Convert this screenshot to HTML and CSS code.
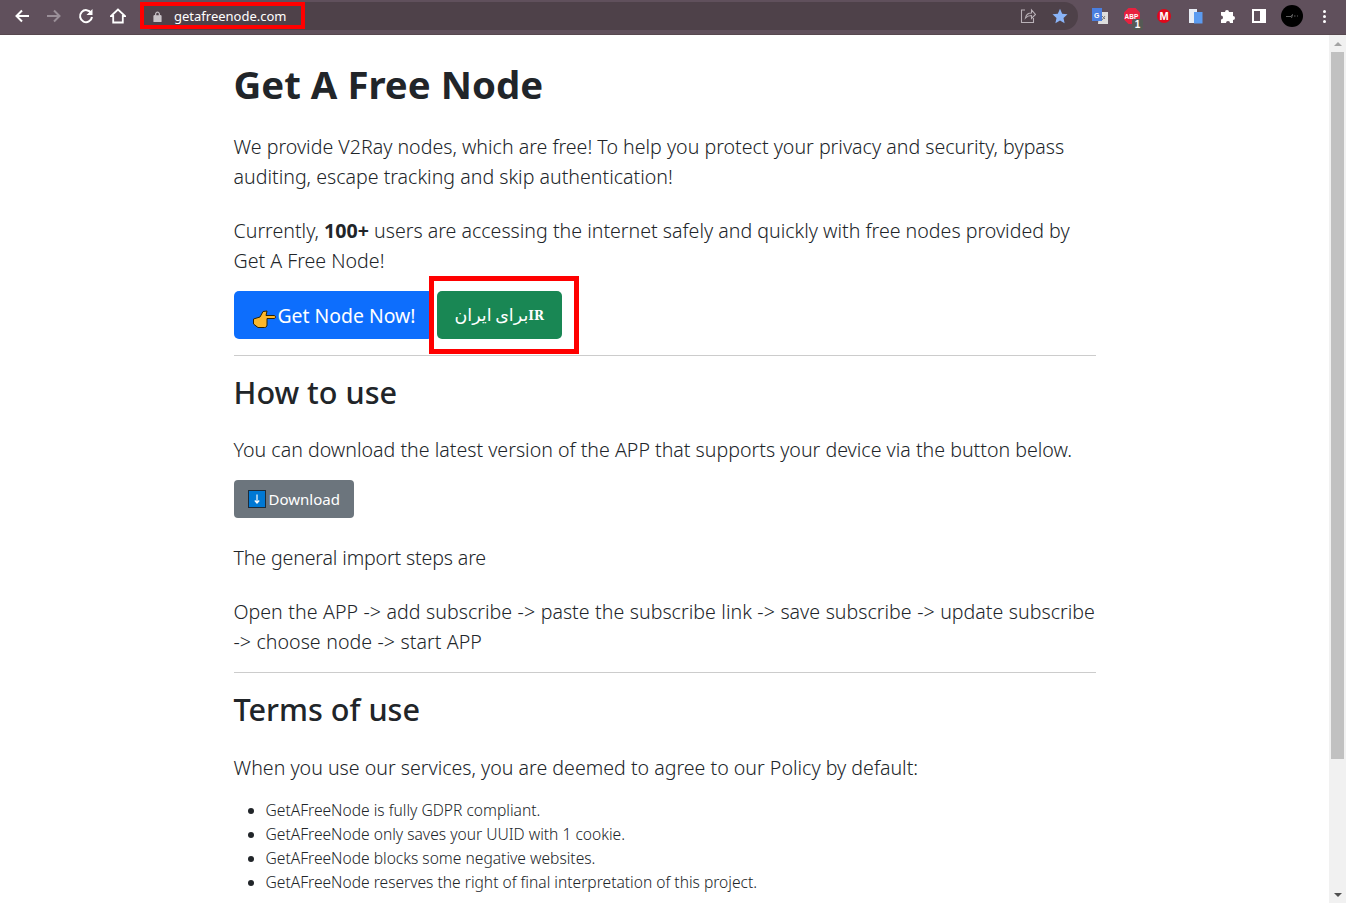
FILE: index.html
```html
<!DOCTYPE html>
<html>
    <head>
        <title>Get A Free Node</title>
        <meta charset="utf-8" />
        <link rel="stylesheet" href="styles.css">
    </head>
    <body>
        <div class="toolbar">
            <svg class="nav-icon" viewBox="0 0 16 16"><path d="M15 8H3M8 2.5L2.5 8 8 13.5" fill="none" stroke="#fff" stroke-width="2"/></svg>
            <svg class="nav-icon" viewBox="0 0 16 16"><path d="M1 8h12M8 2.5L13.5 8 8 13.5" fill="none" stroke="#9a8f98" stroke-width="2"/></svg>
            <svg class="nav-icon" viewBox="0 0 16 16"><path d="M13.2 5A6 6 0 1 0 14 9" fill="none" stroke="#fff" stroke-width="2"/><path d="M14.5 1v6h-6z" fill="#fff"/></svg>
            <svg class="nav-icon" viewBox="0 0 16 16"><path d="M8 1.5L1 8h2.2v6.5h9.6V8H15z" fill="none" stroke="#fff" stroke-width="1.8"/></svg>
            <div class="omnibox">
                <div class="omnibox__url">
                    <svg class="omnibox__lock" viewBox="0 0 10 12"><path d="M1 5h8v7H1zM2.8 5V3.2a2.2 2.2 0 0 1 4.4 0V5" fill="#c9c3c8" stroke="#c9c3c8"/><path d="M3.6 4.5V3.2a1.4 1.4 0 0 1 2.8 0v1.3z" fill="#4e4149"/></svg>
                    <span>getafreenode.com</span>
                    <div class="mark mark--url"></div>
                </div>
                <div class="omnibox__actions">
                    <svg class="tool-icon" viewBox="0 0 16 16"><path d="M5 2H1.500v12.500h12V10M5.500 10c.5-3 3-5 6-5V2l4 4.500-4 4V7.500c-2.500 0-4.500.8-6 2.500z" fill="none" stroke="#b9b1b7" stroke-width="1.100"/></svg>
                    <svg class="tool-icon" viewBox="0 0 16 16"><path d="M8 .8l2.200 4.900 5.300.6-4 3.600 1.100 5.300L8 12.500l-4.600 2.700 1.100-5.300-4-3.600 5.300-.6z" fill="#8ab4f8"/></svg>
                </div>
            </div>
            <div class="extensions">
                <svg class="ext-icon" viewBox="0 0 18 18"><path d="M8 5h9v12H7z" fill="#ddd"/><path d="M1 1h10v13H1z" fill="#4a7fe0"/><text x="3" y="10.500" class="ext-icon__g">G</text><path d="M11 9l3 3M14 9l-3 4" stroke="#777" fill="none"/></svg>
                <div class="abp">
                    <svg class="ext-icon" viewBox="0 0 18 18"><path d="M5.500 1h7L17 5.500v7L12.500 17h-7L1 12.500v-7z" fill="#e8213f"/><text x="1.500" y="11.500" class="ext-icon__abp">ABP</text></svg>
                    <span class="abp__badge">1</span>
                </div>
                <div class="mega">M</div>
                <svg class="ext-icon" viewBox="0 0 18 18"><path d="M2 2h8v14H2z" fill="#e8edf5"/><path d="M7 5h8.500v11.500H7z" fill="#5b9bf0"/></svg>
                <svg class="ext-icon" viewBox="0 0 18 18"><path d="M2 5h4a2 2 0 1 1 4 0h4v4a2 2 0 1 1 0 4v3h-3a2 2 0 1 0-4 0H2v-3.500a2 2 0 1 0 0-4z" fill="#fff"/></svg>
                <div class="side-panel"></div>
                <div class="avatar"><svg viewBox="0 0 14 6"><path d="M1 3.500h5l1.500-2-1 3.500M9 3h1.500M12 3h1" fill="none" stroke="#888" stroke-width=".7"/></svg></div>
                <div class="menu"><i></i><i></i><i></i></div>
            </div>
        </div>

        <div class="viewport">
            <div class="page">
                <div class="container">
                    <h1>Get A Free Node</h1>
                    <p class="lead">We provide V2Ray nodes, which are free! To help you protect your privacy and security, bypass auditing, escape tracking and skip authentication!</p>
                    <p class="lead lead--tight">Currently, <b>100+</b> users are accessing the internet safely and quickly with free nodes provided by Get A Free Node!</p>

                    <div class="actions">
                        <a class="btn btn--lg btn--blue">
                            <svg class="btn__hand" viewBox="0 0 24 18"><path d="M1.500 9L8 7l3-5.500L15 1l-1 4.500h8c2 0 2 3 0 3h-7V15c0 1.500-1 2.500-2.500 2.500H6L4 16l-2.500-2z" fill="#fcb72b" stroke="#2e2200" stroke-width="1"/></svg>
                            <span>Get Node Now!</span>
                        </a>
                        <div class="btn-wrap">
                            <a class="btn btn--lg btn--green"><span class="btn__farsi">برای ایران</span><span class="btn__flag">IR</span></a>
                            <div class="mark mark--btn"></div>
                        </div>
                    </div>
                    <hr>

                    <h2>How to use</h2>
                    <p class="lead lead--tight">You can download the latest version of the APP that supports your device via the button below.</p>
                    <a class="btn btn--grey">
                        <svg class="btn__arrow" viewBox="0 0 18 18"><rect x=".5" y=".5" width="17" height="17" fill="#0078d4" stroke="#1c2b3a"/><path d="M9 4.500v8M6.800 10.500L9 13l2.200-2.500" fill="none" stroke="#fff" stroke-width="1.200"/></svg>
                        <span>Download</span>
                    </a>
                    <p class="lead lead--steps">The general import steps are</p>
                    <p class="lead lead--tight lead--arrows">Open the APP -&gt; add subscribe -&gt; paste the subscribe link -&gt; save subscribe -&gt; update subscribe -&gt; choose node -&gt; start APP</p>
                    <hr class="hr--second">

                    <h2>Terms of use</h2>
                    <p class="lead lead--terms">When you use our services, you are deemed to agree to our Policy by default:</p>
                    <ul class="terms">
                        <li>GetAFreeNode is fully GDPR compliant.</li>
                        <li>GetAFreeNode only saves your UUID with 1 cookie.</li>
                        <li>GetAFreeNode blocks some negative websites.</li>
                        <li>GetAFreeNode reserves the right of final interpretation of this project.</li>
                    </ul>
                </div>
            </div>
            <div class="scrollbar">
                <div class="scrollbar__arrow scrollbar__arrow--up"></div>
                <div class="scrollbar__track"><div class="scrollbar__thumb"></div></div>
                <div class="scrollbar__arrow scrollbar__arrow--down"></div>
            </div>
        </div>
    </body>
</html>
```

FILE: styles.css
```css
* {
    padding: 0px;
    margin: 0px;
    box-sizing: border-box;
}

html, body{
    height: 903px;
    overflow: hidden;
    background-color: white;
    color: #212529;
    font-family: "Noto Sans", sans-serif;
}

body{
    display: flex;
    flex-direction: column;
}

/* browser toolbar */
.toolbar{
    height: 35px;
    flex: none;
    display: flex;
    align-items: center;
    padding: 0 0 2px 14px;
    background-color: #60505c;
    border-bottom: solid 1px #57484f;
}

.nav-icon{
    width: 16px;
    height: 16px;
    margin-right: 16px;
    flex: none;
}

.omnibox{
    flex: 1;
    height: 28px;
    margin-left: -2px;
    display: flex;
    align-items: center;
    justify-content: space-between;
    background-color: #4e4149;
    border-radius: 14px;
    padding-left: 10px;
}

.omnibox__url{
    position: relative;
    display: flex;
    align-items: center;
    color: white;
    font-size: 13px;
    padding-left: 3px;
}

.omnibox__lock{
    width: 9px;
    height: 11px;
    margin-right: 12px;
}

.omnibox__actions{
    display: flex;
    gap: 16px;
    padding-right: 10px;
}

.tool-icon{
    width: 16px;
    height: 16px;
}

.extensions{
    display: flex;
    align-items: center;
    gap: 14px;
    padding: 0 19px 0 13px;
}

.ext-icon{
    width: 18px;
    height: 18px;
    display: block;
}

.ext-icon__g{
    font: bold 7px "Liberation Sans", sans-serif;
    fill: white;
}

.ext-icon__abp{
    font: bold 6.500px "Liberation Sans", sans-serif;
    fill: white;
}

.abp{
    position: relative;
}

.abp__badge{
    position: absolute;
    right: -2px;
    bottom: -5px;
    width: 11px;
    height: 11px;
    text-align: center;
    font: bold 10px/11px "Liberation Sans", sans-serif;
    color: white;
    background-color: #555a55;
    border-radius: 2px;
}

.mega{
    width: 14px;
    height: 14px;
    margin: 0 2px;
    border-radius: 50%;
    background-color: #e0071a;
    color: white;
    font: bold 11px/14px "Liberation Sans", sans-serif;
    text-align: center;
}

.side-panel{
    width: 14px;
    height: 14px;
    margin: 0 1px;
    background-color: #60505c;
    border: solid 2px white;
    border-right-width: 6px;
}

.avatar{
    width: 22px;
    height: 22px;
    border-radius: 50%;
    background-color: black;
    display: flex;
    align-items: center;
    justify-content: center;
}

.avatar svg{
    width: 14px;
    height: 6px;
}

.menu{
    width: 4px;
    display: flex;
    flex-direction: column;
    gap: 2px;
    margin-left: 6px;
}

.menu i{
    width: 3px;
    height: 3px;
    background-color: white;
    border-radius: 50%;
}

/* the red boxes drawn over the screenshot */
.mark{
    position: absolute;
    border: solid 5px #f00;
    pointer-events: none;
}

.mark--url{
    left: -10px;
    top: -5px;
    width: 165px;
    height: 27px;
    border-width: 4px;
}

.mark--btn{
    left: -8px;
    top: -15px;
    width: 150px;
    height: 78px;
}

/* page */
.viewport{
    flex: 1;
    display: flex;
    min-height: 0;
}

.page{
    flex: 1;
    overflow: hidden;
}

.container{
    width: 862px;
    margin: 0 auto;
    padding-top: 25px;
}

h1{
    font-size: 38.400px;
    line-height: 48px;
    font-weight: 700;
    margin-bottom: 24px;
}

h2{
    font-size: 30.600px;
    line-height: 38px;
    font-weight: 500;
    margin-bottom: 24px;
}

.lead{
    font-size: 19.600px;
    line-height: 30px;
    font-weight: 300;
    margin-bottom: 24px;
}

.lead b{
    font-weight: 700;
}

.lead--tight{
    margin-bottom: 15px;
}

.lead--steps{
    margin-top: 25px;
    letter-spacing: -.15px;
}

.lead--arrows{
    word-spacing: .45px;
}

.lead--terms{
    margin-top: 25px;
    margin-bottom: 15px;
}

.actions{
    display: flex;
    gap: 4px;
}

.btn-wrap{
    position: relative;
}

.btn{
    display: inline-flex;
    align-items: center;
    color: white;
    border-radius: 4px;
    font-size: 15px;
    height: 38px;
    padding: 0 13px;
    white-space: nowrap;
}

.btn--lg{
    height: 48px;
    font-size: 19.400px;
    border-radius: 5px;
    padding: 0 16px;
}

.btn--blue{
    background-color: #0d6efd;
    width: 199px;
}

.btn--green{
    background-color: #198754;
    width: 125px;
    padding: 0 16px 0 18px;
}

.btn--grey{
    background-color: #6c757d;
    width: 120px;
}

.btn__hand{
    width: 24px;
    height: 18px;
    margin: 7px 2px 0 2px;
    flex: none;
}

.btn__farsi{
    font-family: "DejaVu Sans", sans-serif;
    font-size: 17.500px;
    word-spacing: -2px;
}

.btn__flag{
    font: bold 12px "DejaVu Serif", serif;
    margin-top: 2px;
}

.btn__arrow{
    width: 18px;
    height: 18px;
    margin: 0 3px 0 1px;
    flex: none;
}

hr{
    border: 0;
    border-top: solid 1px #ccc;
    margin: 16px 0 17px;
}

.hr--second{
    margin: 0 0 17px;
}

.terms{
    padding-left: 32px;
    font-size: 15.600px;
    line-height: 24px;
    font-weight: 300;
}

/* scrollbar */
.scrollbar{
    width: 17px;
    flex: none;
    display: flex;
    flex-direction: column;
    background-color: #f1f1f1;
}

.scrollbar__arrow{
    height: 17px;
    flex: none;
    display: flex;
    justify-content: center;
    align-items: center;
}

.scrollbar__arrow::before{
    content: "";
    border-left: solid 4px transparent;
    border-right: solid 4px transparent;
}

.scrollbar__arrow--up::before{
    border-bottom: solid 4px #a3a3a3;
}

.scrollbar__arrow--down::before{
    border-top: solid 4px #505050;
}

.scrollbar__track{
    flex: 1;
    padding: 0 2px;
}

.scrollbar__thumb{
    height: 707px;
    background-color: #c1c1c1;
}
```
